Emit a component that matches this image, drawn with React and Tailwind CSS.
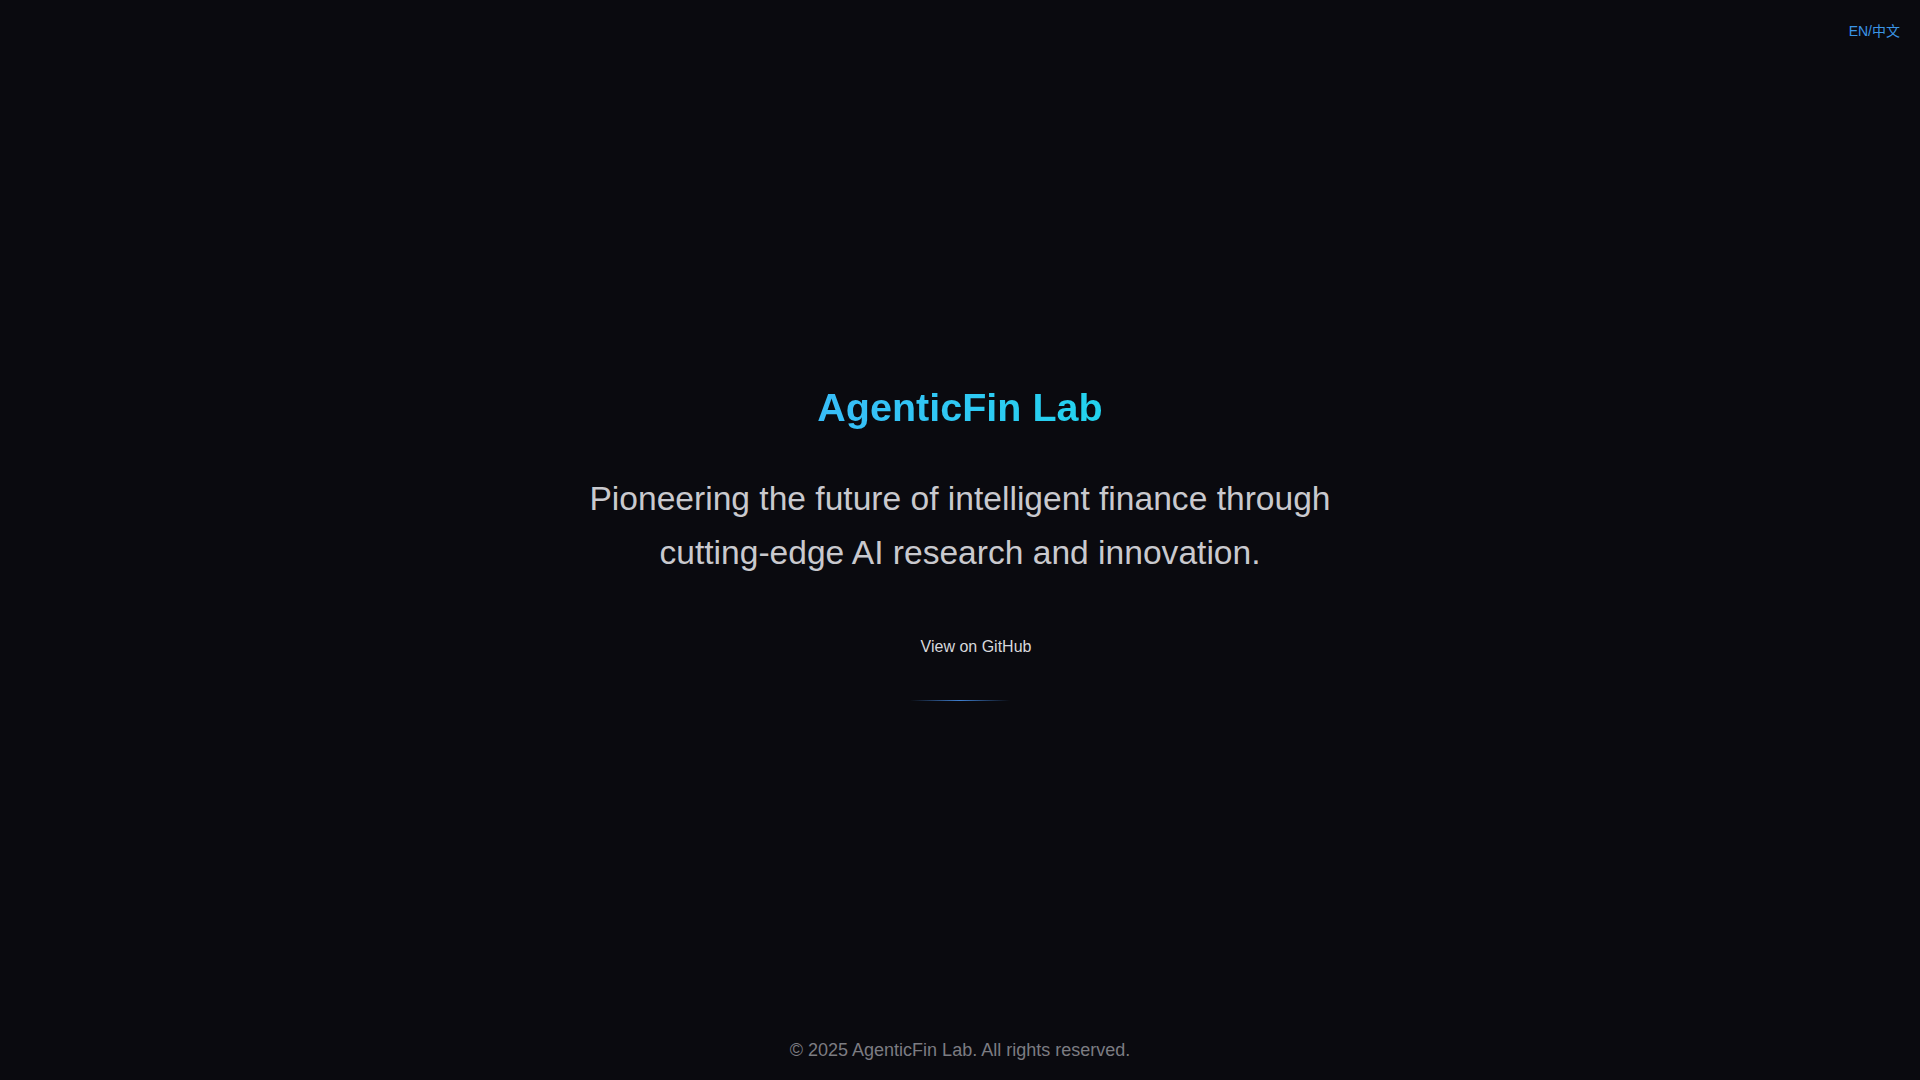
import React from 'react';

export default function App() {
  return (
    <div className="relative min-h-screen bg-[#0a0a0f] font-['Liberation_Sans',Arial,sans-serif] flex items-center justify-center">
      {/* language toggle */}
      <button className="absolute top-[21px] right-5 text-sm leading-5 text-[#3b95e6] font-['Liberation_Sans','Noto_Sans_CJK_SC',sans-serif]">
        EN/中文
      </button>

      <main className="pt-[4px] flex flex-col items-center text-center">
        <h1 className="text-[39.5px] leading-[48px] font-bold bg-linear-to-r from-[#38bdf8] to-[#22d3ee] bg-clip-text text-transparent">
          AgenticFin Lab
        </h1>
        <p className="mt-[41px] text-[33.6px] leading-[54px] text-[#c9c9ce]">
          Pioneering the future of intelligent finance through
          <br />
          cutting-edge AI research and innovation.
        </p>
        <a href="#" className="mt-[55px] flex items-center gap-2 text-base leading-6 text-[#d8d8dc]">
          <span className="w-6 h-6" />
          View on GitHub
        </a>
        <div className="mt-[41px] w-[100px] h-px bg-linear-to-r from-transparent via-[#3f7fd0] to-transparent" />
      </main>

      <footer className="absolute bottom-4 inset-x-0 text-center text-lg leading-[27px] text-[#7c7c82]">
        © 2025 AgenticFin Lab. All rights reserved.
      </footer>
    </div>
  );
}
